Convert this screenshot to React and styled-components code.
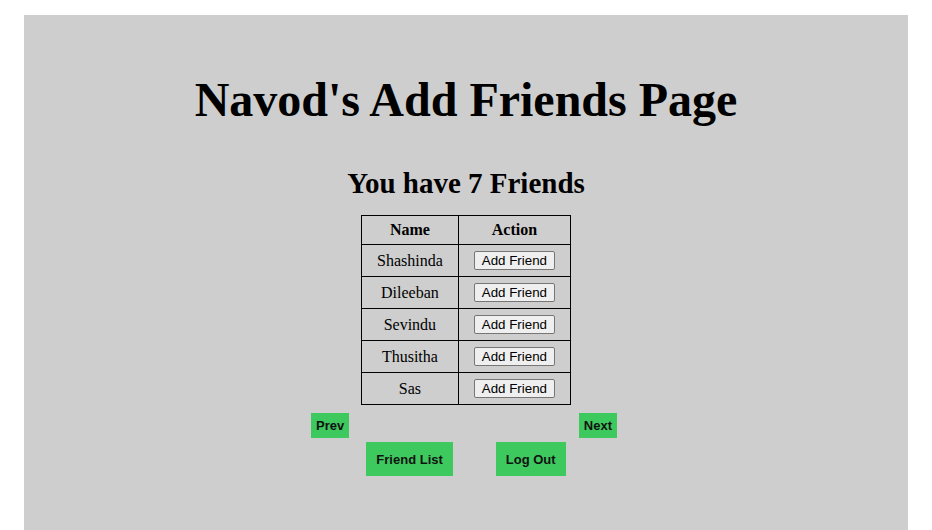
import React, {useState} from "react"
import styled, {createGlobalStyle} from "styled-components"

const GlobalStyles = createGlobalStyle`
  body {
    margin: 0;
    background: #ffffff;
    font-family: "Liberation Serif", "Times New Roman", serif;
  }
`

const friends = ["Shashinda", "Dileeban", "Sevindu", "Thusitha", "Sas"]

const App = () => {
    const [page, setPage] = useState(0)

    return <>
        <GlobalStyles/>
        <Panel>
            <Title>Navod's Add Friends Page</Title>
            <Subtitle>You have 7 Friends</Subtitle>
            <Table>
                <thead>
                <tr>
                    <Th>Name</Th>
                    <Th>Action</Th>
                </tr>
                </thead>
                <tbody>
                {friends.map(name =>
                    <tr key={name}>
                        <Td>{name}</Td>
                        <Td><AddButton>Add Friend</AddButton></Td>
                    </tr>
                )}
                </tbody>
            </Table>
            <Pager>
                <GreenButton $small onClick={() => setPage(Math.max(0, page - 1))}>Prev</GreenButton>
                <GreenButton $small onClick={() => setPage(page + 1)}>Next</GreenButton>
            </Pager>
            <Actions>
                <GreenButton>Friend List</GreenButton>
                <GreenButton>Log Out</GreenButton>
            </Actions>
        </Panel>
    </>
}

export default App

const Panel = styled.div`
  margin: 15px 24px 0;
  min-height: 515px;
  background-color: #cecece;
  display: flex;
  flex-direction: column;
  align-items: center;
  padding-top: 1px;
`

const Title = styled.h1`
  font-size: 48px;
  font-weight: bold;
  margin: 56px 0 0;
  line-height: 1.15;
`

const Subtitle = styled.h2`
  font-size: 29px;
  font-weight: bold;
  margin: 40px 0 0;
  line-height: 32px;
`

const Table = styled.table`
  border-collapse: collapse;
  margin-top: 16px;
  font-size: 16px;
`

const Th = styled.th`
  border: 1px solid #000;
  height: 28px;
  padding: 0 15px;
  text-align: center;
`

const Td = styled.td`
  border: 1px solid #000;
  height: 31px;
  padding: 0 15px;
  text-align: center;
`

const AddButton = styled.button`
  font-family: "Liberation Sans", Arial, sans-serif;
  font-size: 13.33px;
  background: #efefef;
  border: 1px solid #767676;
  border-radius: 2px;
  padding: 1px 7px;
  color: #000;
`

const Pager = styled.div`
  display: flex;
  justify-content: space-between;
  width: 306px;
  margin-top: 8px;
  margin-right: 4px;
`

const Actions = styled.div`
  display: flex;
  gap: 43px;
  margin-top: 4px;
`

const GreenButton = styled.button`
  font-family: "Liberation Sans", Arial, sans-serif;
  font-weight: bold;
  font-size: 13px;
  color: #111;
  background-color: #3ec95f;
  border: none;
  padding: ${props => props.$small ? "0 5px" : "0 10px"};
  height: ${props => props.$small ? "25px" : "34px"};
`
